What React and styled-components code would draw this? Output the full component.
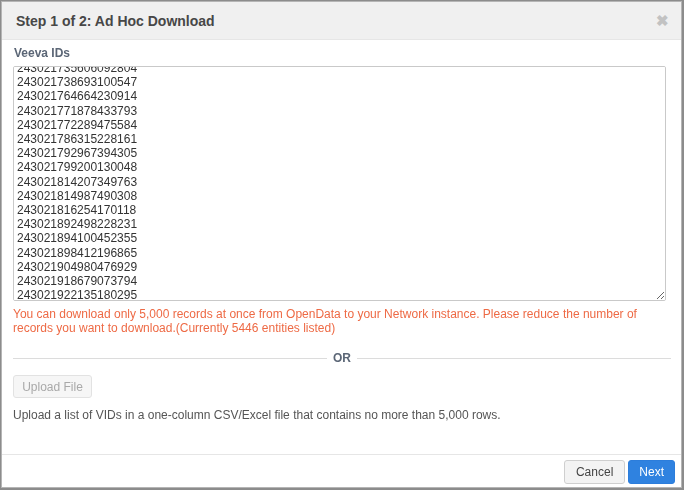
import styled, { createGlobalStyle } from "styled-components";
import { useEffect, useRef } from "react";

const before = [
  "243021601128877312", "243021612934401126", "243021625870043391", "243021638815572204",
  "243021649021176538", "243021661837290447", "243021674419902853", "243021689203318760",
  "243021701566420194", "243021719907735512",
];

const ids = [
  "243021735606092804", "243021738693100547", "243021764664230914", "243021771878433793",
  "243021772289475584", "243021786315228161", "243021792967394305", "243021799200130048",
  "243021814207349763", "243021814987490308", "243021816254170118", "243021892498228231",
  "243021894100452355", "243021898412196865", "243021904980476929", "243021918679073794",
  "243021922135180295",
];

const after = [
  "243021937760214488", "243021945512093367", "243021958826417701", "243021963304478152",
  "243021979015562839", "243021986642110594",
];

const GlobalStyle = createGlobalStyle`
  html, body { margin: 0; padding: 0; }
  body {
    width: 684px;
    height: 490px;
    background: #8c8c8c;
    font-family: "Liberation Sans", Arial, sans-serif;
    overflow: hidden;
  }
`;

const Modal = styled.div`
  box-sizing: border-box;
  margin: 1px 0 0 1px;
  width: 681px;
  height: 487px;
  background: #fff;
  border: 1px solid #b5b5b5;
  display: flex;
  flex-direction: column;
`;

const Header = styled.div`
  height: 37px;
  flex: none;
  background: #f0f0f0;
  border-bottom: 1px solid #e6e6e6;
  display: flex;
  align-items: center;
  justify-content: space-between;
  padding: 0 12px 0 14px;
`;

const Title = styled.div`
  font-size: 14px;
  font-weight: bold;
  color: #474747;
`;

const Close = styled.span`
  font-size: 15px;
  font-weight: bold;
  color: #c2c2c2;
  line-height: 1;
`;

const Body = styled.div`
  flex: 1;
  padding: 5px 10px 0 11px;
`;

const Label = styled.div`
  font-size: 12px;
  font-weight: bold;
  color: #5b6676;
  line-height: 16px;
  margin-bottom: 5px;
  padding-left: 1px;
`;

const IdBox = styled.textarea`
  display: block;
  box-sizing: border-box;
  width: 653px;
  height: 235px;
  margin: 0;
  padding: 2px 3px;
  border: 1px solid #c9c9c9;
  border-radius: 2px;
  font-family: "Liberation Sans", Arial, sans-serif;
  font-size: 12px;
  line-height: 14.2px;
  color: #333;
  scrollbar-width: none;
  &::-webkit-scrollbar { display: none; }
  &:focus { outline: none; }
`;

const Warning = styled.div`
  margin-top: 6px;
  font-size: 12px;
  line-height: 14px;
  color: #ee6a45;
`;

const Divider = styled.div`
  display: flex;
  align-items: center;
  gap: 6px;
  margin-top: 15px;
  height: 16px;
  font-size: 12px;
  font-weight: bold;
  color: #5b6676;
  &::before, &::after {
    content: "";
    flex: 1;
    height: 1px;
    background: #dcdcdc;
  }
`;

const UploadButton = styled.button`
  margin-top: 9px;
  height: 23px;
  width: 79px;
  padding: 0;
  border: 1px solid #e2e2e2;
  border-radius: 3px;
  background: #f6f6f6;
  font-family: "Liberation Sans", Arial, sans-serif;
  font-size: 12px;
  color: #a9a9a9;
`;

const Hint = styled.div`
  margin-top: 9px;
  font-size: 12px;
  line-height: 16px;
  color: #555;
`;

const Footer = styled.div`
  flex: none;
  height: 33px;
  box-sizing: border-box;
  border-top: 1px solid #e6e6e6;
  display: flex;
  justify-content: flex-end;
  align-items: flex-start;
  gap: 3px;
  padding: 5px 6px 0 0;
`;

const Button = styled.button`
  height: 24px;
  padding: 0 ${(p) => (p.$primary ? "10px" : "11px")};
  border-radius: 3px;
  border: 1px solid ${(p) => (p.$primary ? "#2c7ddb" : "#cfcfcf")};
  background: ${(p) => (p.$primary ? "#2f82e0" : "#f3f3f3")};
  color: ${(p) => (p.$primary ? "#fff" : "#444")};
  font-family: "Liberation Sans", Arial, sans-serif;
  font-size: 12px;
`;

export default function App() {
  const boxRef = useRef(null);

  useEffect(() => {
    if (boxRef.current) boxRef.current.scrollTop = 150;
  }, []);

  return (
    <>
      <GlobalStyle />
      <Modal>
        <Header>
          <Title>Step 1 of 2: Ad Hoc Download</Title>
          <Close>✖</Close>
        </Header>
        <Body>
          <Label>Veeva IDs</Label>
          <IdBox
            ref={boxRef}
            defaultValue={[...before, ...ids, ...after].join("\n")}
            spellCheck={false}
          />
          <Warning>
            You can download only 5,000 records at once from OpenData to your Network instance. Please reduce the number of
            records you want to download.(Currently 5446 entities listed)
          </Warning>
          <Divider>OR</Divider>
          <UploadButton disabled>Upload File</UploadButton>
          <Hint>Upload a list of VIDs in a one-column CSV/Excel file that contains no more than 5,000 rows.</Hint>
        </Body>
        <Footer>
          <Button>Cancel</Button>
          <Button $primary>Next</Button>
        </Footer>
      </Modal>
    </>
  );
}
